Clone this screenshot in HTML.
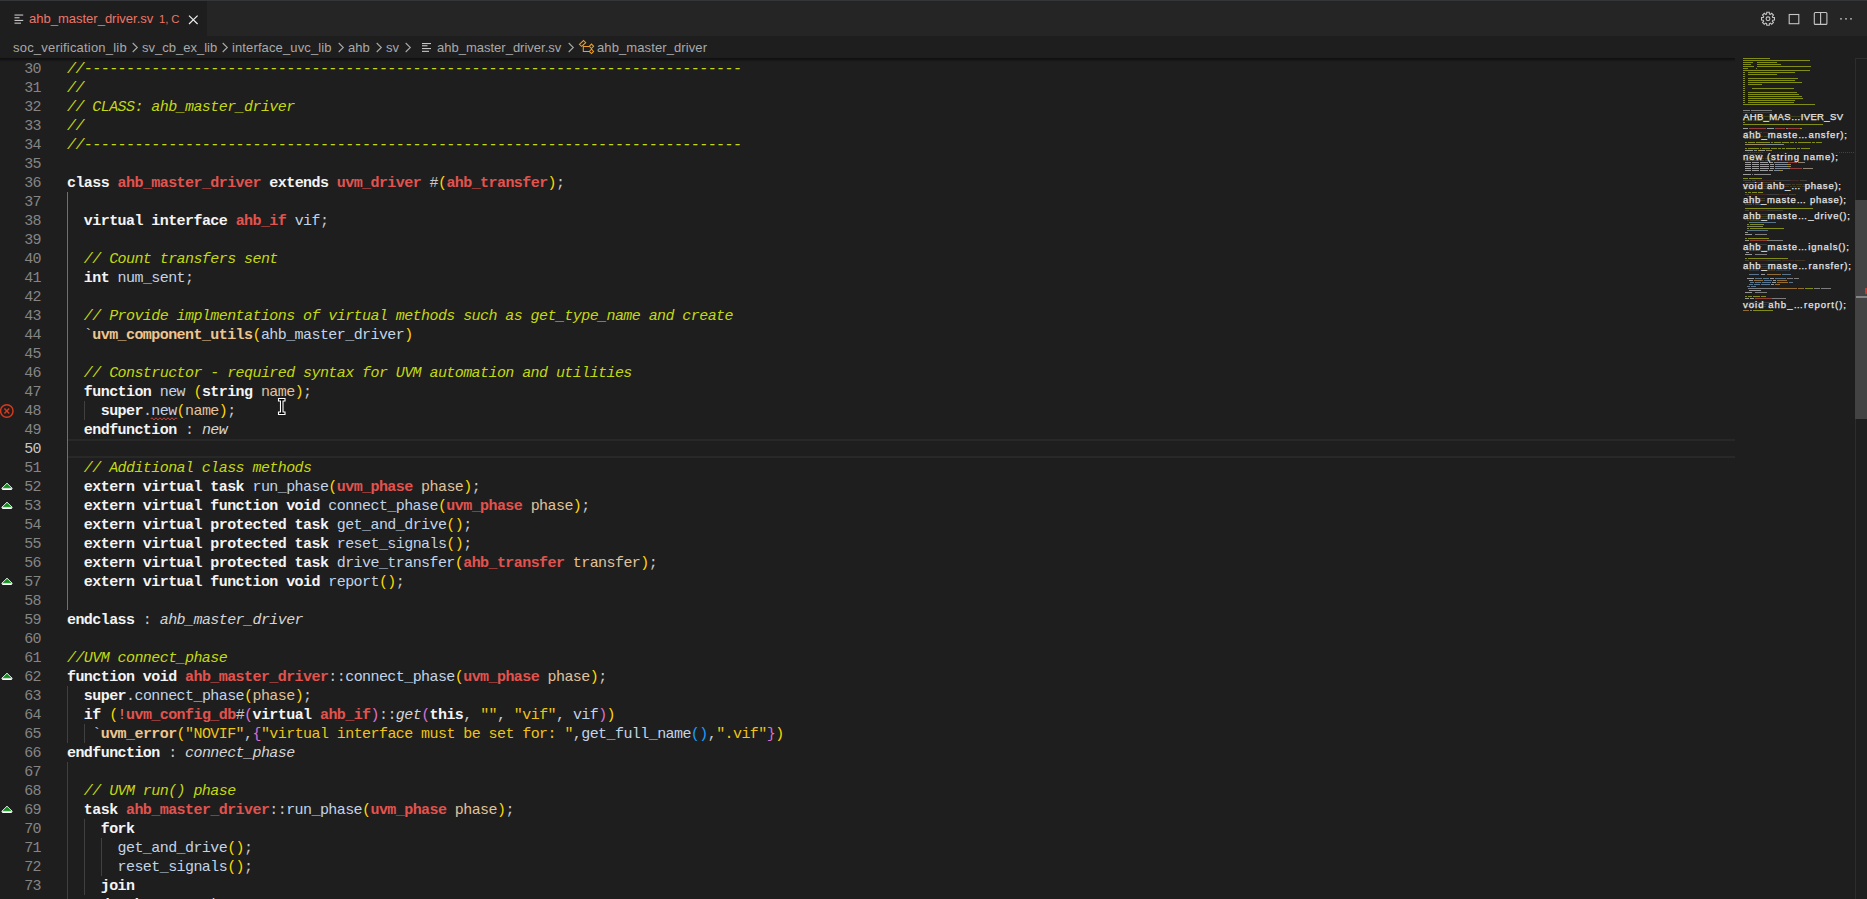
<!DOCTYPE html>
<html><head><meta charset="utf-8">
<style>
*{margin:0;padding:0;box-sizing:border-box}
html,body{width:1867px;height:899px;overflow:hidden;background:#1e1e1e}
body{position:relative;font-family:"Liberation Sans",sans-serif}
svg{position:absolute;overflow:visible}
#topb{position:absolute;left:0;top:0;width:1867px;height:1px;background:#35363a}
#tabs{position:absolute;left:0;top:1px;width:1867px;height:35px;background:#252526}
#tab{position:absolute;left:0;top:0;width:207px;height:35px;background:#1e1e1e}
#crumbs{position:absolute;left:0;top:36px;width:1867px;height:22px;background:#1e1e1e;color:#a9a9a9}
.ui{position:absolute;white-space:pre;font-size:13px;line-height:16px}
.ln{position:absolute;left:0;width:41px;text-align:right;font-family:"Liberation Mono",monospace;font-size:15px;letter-spacing:-0.572px;line-height:19px;height:19px;padding-top:2px;color:#858585}
.ln.act{color:#c6c6c6}
.cl{position:absolute;left:67px;font-family:"Liberation Mono",monospace;font-size:15px;letter-spacing:-0.572px;line-height:19px;height:19px;padding-top:2px;white-space:pre;color:#c8c8c8}
.c{color:#c4d814;font-style:italic}
.k{color:#f4f4f4;font-weight:bold}
.t{color:#e2534e;font-weight:bold}
.tr{color:#e2534e}
.i{color:#c2d4e8}
.p{color:#e0c29c}
.m{color:#eec58e;font-weight:bold}
.bt{color:#a8bcd0}
.ex{color:#e57a76}
.o{color:#c8c8c8}
.sq{color:#c2d4e8}
.b1{color:#ffd700}.b2{color:#da70d6}.b3{color:#179fff}
.s{color:#eec418}
.e{color:#d4d4d4;font-style:italic}
.g{position:absolute;width:1px;background:#404040}
.g.ga{background:#6d7073}
#curline{position:absolute;left:68px;top:439px;width:1667px;height:19px;border-top:2px solid #282828;border-bottom:2px solid #282828}
#shadow{position:absolute;left:0;top:58px;width:1735px;height:4px;background:linear-gradient(rgba(0,0,0,.55),rgba(0,0,0,0))}
#vsb{position:absolute;left:1855px;top:58px;width:12px;height:841px;border-left:1px solid #2d2d2d;border-top:1px solid #2d2d2d}
#slider{position:absolute;left:1855px;top:200px;width:12px;height:219px;background:#434343}
.mm{position:absolute;height:2px;background-clip:content-box!important;padding-bottom:1px}
.mh{position:absolute;left:1743px;font-size:9.5px;font-weight:normal;line-height:11px;color:#e6e6e6;white-space:pre;-webkit-text-stroke:0.25px #e6e6e6;background:rgba(30,30,30,.7)}
</style></head><body>
<div id="topb"></div>
<div id="tabs"><div id="tab">
  <svg style="left:0;top:0" width="30" height="35"><g fill="#c5c5c5"><rect x="14.5" y="13.5" width="8.7" height="1.1"/><rect x="14.5" y="16.2" width="5" height="1.1"/><rect x="14.5" y="18.9" width="8.7" height="1.1"/><rect x="14.5" y="21.6" width="6.5" height="1.1"/></g></svg>
  <div class="ui" style="left:29px;top:10px;color:#ef7566">ahb_master_driver.sv</div>
  <div class="ui" style="left:159px;top:10.2px;font-size:11.3px;color:#ef7566">1,</div><div class="ui" style="left:171.3px;top:10.2px;font-size:11.3px;color:#ef7566">C</div>
  <svg style="left:0;top:0" width="207" height="35"><path d="M189 14.6 L197.6 23 M197.6 14.6 L189 23" stroke="#ededed" stroke-width="1.2"/></svg>
</div>
  <svg style="left:1755px;top:-1px" width="112" height="35">
    <g fill="none" stroke="#c5c5c5" stroke-width="1.1">
      <path d="M17.53 16.92 L17.69 17.37 L19.48 17.54 L19.48 20.06 L17.69 20.23 L17.53 20.68 L17.33 21.10 L18.47 22.49 L16.69 24.27 L15.30 23.13 L14.88 23.33 L14.43 23.49 L14.26 25.28 L11.74 25.28 L11.57 23.49 L11.12 23.33 L10.70 23.13 L9.31 24.27 L7.53 22.49 L8.67 21.10 L8.47 20.68 L8.31 20.23 L6.52 20.06 L6.52 17.54 L8.31 17.37 L8.47 16.92 L8.67 16.50 L7.53 15.11 L9.31 13.33 L10.70 14.47 L11.12 14.27 L11.57 14.11 L11.74 12.32 L14.26 12.32 L14.43 14.11 L14.88 14.27 L15.30 14.47 L16.69 13.33 L18.47 15.11 L17.33 16.50 Z"/>
      <circle cx="13" cy="18.8" r="1.9"/>
      <rect x="34.2" y="14.5" width="9.6" height="9.2"/>
      <rect x="59.3" y="12.5" width="12.6" height="11.9" rx="1"/>
      <path d="M65.6 12.5 V24.4"/>
    </g>
    <g fill="#c5c5c5"><circle cx="86" cy="18.8" r="0.9"/><circle cx="91" cy="18.8" r="0.9"/><circle cx="96" cy="18.8" r="0.9"/></g>
  </svg>
</div>
<div id="crumbs">
  <div class="ui" style="left:13px;top:4px;letter-spacing:0.2px">soc_verification_lib</div>
  <div class="ui" style="left:142px;top:4px">sv_cb_ex_lib</div>
  <div class="ui" style="left:232px;top:4px;letter-spacing:0.12px">interface_uvc_lib</div>
  <div class="ui" style="left:348px;top:4px">ahb</div>
  <div class="ui" style="left:386px;top:4px">sv</div>
  <div class="ui" style="left:437px;top:4px">ahb_master_driver.sv</div>
  <div class="ui" style="left:597px;top:4px;letter-spacing:0.1px">ahb_master_driver</div>
  <svg style="left:0;top:0" width="800" height="22"><g fill="none" stroke="#a9a9a9" stroke-width="1.1">
    <path d="M132.7 7 L137.3 11.5 L132.7 16"/>
    <path d="M222.7 7 L227.3 11.5 L222.7 16"/>
    <path d="M338.7 7 L343.3 11.5 L338.7 16"/>
    <path d="M376.7 7 L381.3 11.5 L376.7 16"/>
    <path d="M405.7 7 L410.3 11.5 L405.7 16"/>
    <path d="M568.7 7 L573.3 11.5 L568.7 16"/>
  </g>
  <g fill="#c5c5c5"><rect x="422" y="7" width="9" height="1.1"/><rect x="422" y="9.2" width="5.5" height="1.1"/><rect x="422" y="12" width="9" height="1.1"/><rect x="422" y="14.8" width="7" height="1.1"/></g>
  <g fill="none" stroke="#ee9d28" stroke-width="1.05">
    <path d="M579.4 8.3 L583.5 4.5 L585.7 6.7 L581.6 10.4 Z"/>
    <path d="M583.3 9.6 V15.4 H589.2 M583.3 10.4 H589.2"/>
    <path d="M591.5 8.1 L593.6 10.3 L591.5 12.5 L589.3 10.3 Z"/>
    <path d="M591.5 13.2 L593.6 15.4 L591.5 17.6 L589.3 15.4 Z"/>
  </g></svg>
</div>
<div id="editor-layer">
<div id="curline"></div>
<div class="g ga" style="left:67px;top:192px;height:418px"></div>
<div class="g" style="left:84px;top:401px;height:19px"></div>
<div class="g" style="left:67px;top:686px;height:57px"></div>
<div class="g" style="left:84px;top:724px;height:19px"></div>
<div class="g" style="left:67px;top:762px;height:152px"></div>
<div class="g" style="left:84px;top:819px;height:76px"></div>
<div class="g" style="left:101px;top:838px;height:38px"></div>
<div class="ln" style="top:58px">30</div>
<div class="cl" style="top:58px"><span class="c">//------------------------------------------------------------------------------</span></div>
<div class="ln" style="top:77px">31</div>
<div class="cl" style="top:77px"><span class="c">//</span></div>
<div class="ln" style="top:96px">32</div>
<div class="cl" style="top:96px"><span class="c">// CLASS: ahb_master_driver</span></div>
<div class="ln" style="top:115px">33</div>
<div class="cl" style="top:115px"><span class="c">//</span></div>
<div class="ln" style="top:134px">34</div>
<div class="cl" style="top:134px"><span class="c">//------------------------------------------------------------------------------</span></div>
<div class="ln" style="top:153px">35</div>
<div class="ln" style="top:172px">36</div>
<div class="cl" style="top:172px"><span class="k">class</span> <span class="t">ahb_master_driver</span> <span class="k">extends</span> <span class="t">uvm_driver</span> <span class="o">#</span><span class="b1">(</span><span class="t">ahb_transfer</span><span class="b1">)</span><span class="o">;</span></div>
<div class="ln" style="top:191px">37</div>
<div class="ln" style="top:210px">38</div>
<div class="cl" style="top:210px">  <span class="k">virtual</span> <span class="k">interface</span> <span class="t">ahb_if</span> <span class="i">vif</span><span class="o">;</span></div>
<div class="ln" style="top:229px">39</div>
<div class="ln" style="top:248px">40</div>
<div class="cl" style="top:248px">  <span class="c">// Count transfers sent</span></div>
<div class="ln" style="top:267px">41</div>
<div class="cl" style="top:267px">  <span class="k">int</span> <span class="i">num_sent</span><span class="o">;</span></div>
<div class="ln" style="top:286px">42</div>
<div class="ln" style="top:305px">43</div>
<div class="cl" style="top:305px">  <span class="c">// Provide implmentations of virtual methods such as get_type_name and create</span></div>
<div class="ln" style="top:324px">44</div>
<div class="cl" style="top:324px">  <span class="bt">`</span><span class="m">uvm_component_utils</span><span class="b1">(</span><span class="i">ahb_master_driver</span><span class="b1">)</span></div>
<div class="ln" style="top:343px">45</div>
<div class="ln" style="top:362px">46</div>
<div class="cl" style="top:362px">  <span class="c">// Constructor - required syntax for UVM automation and utilities</span></div>
<div class="ln" style="top:381px">47</div>
<div class="cl" style="top:381px">  <span class="k">function</span> <span class="i">new</span> <span class="b1">(</span><span class="k">string</span> <span class="p">name</span><span class="b1">)</span><span class="o">;</span></div>
<div class="ln" style="top:400px">48</div>
<div class="cl" style="top:400px">    <span class="k">super</span><span class="o">.</span><span class="sq">new</span><span class="b1">(</span><span class="p">name</span><span class="b1">)</span><span class="o">;</span></div>
<div class="ln" style="top:419px">49</div>
<div class="cl" style="top:419px">  <span class="k">endfunction</span><span class="o"> : </span><span class="e">new</span></div>
<div class="ln act" style="top:438px">50</div>
<div class="ln" style="top:457px">51</div>
<div class="cl" style="top:457px">  <span class="c">// Additional class methods</span></div>
<div class="ln" style="top:476px">52</div>
<div class="cl" style="top:476px">  <span class="k">extern virtual task</span> <span class="i">run_phase</span><span class="b1">(</span><span class="t">uvm_phase</span> <span class="p">phase</span><span class="b1">)</span><span class="o">;</span></div>
<div class="ln" style="top:495px">53</div>
<div class="cl" style="top:495px">  <span class="k">extern virtual function void</span> <span class="i">connect_phase</span><span class="b1">(</span><span class="t">uvm_phase</span> <span class="p">phase</span><span class="b1">)</span><span class="o">;</span></div>
<div class="ln" style="top:514px">54</div>
<div class="cl" style="top:514px">  <span class="k">extern virtual protected task</span> <span class="i">get_and_drive</span><span class="b1">()</span><span class="o">;</span></div>
<div class="ln" style="top:533px">55</div>
<div class="cl" style="top:533px">  <span class="k">extern virtual protected task</span> <span class="i">reset_signals</span><span class="b1">()</span><span class="o">;</span></div>
<div class="ln" style="top:552px">56</div>
<div class="cl" style="top:552px">  <span class="k">extern virtual protected task</span> <span class="i">drive_transfer</span><span class="b1">(</span><span class="t">ahb_transfer</span> <span class="p">transfer</span><span class="b1">)</span><span class="o">;</span></div>
<div class="ln" style="top:571px">57</div>
<div class="cl" style="top:571px">  <span class="k">extern virtual function void</span> <span class="i">report</span><span class="b1">()</span><span class="o">;</span></div>
<div class="ln" style="top:590px">58</div>
<div class="ln" style="top:609px">59</div>
<div class="cl" style="top:609px"><span class="k">endclass</span><span class="o"> : </span><span class="e">ahb_master_driver</span></div>
<div class="ln" style="top:628px">60</div>
<div class="ln" style="top:647px">61</div>
<div class="cl" style="top:647px"><span class="c">//UVM connect_phase</span></div>
<div class="ln" style="top:666px">62</div>
<div class="cl" style="top:666px"><span class="k">function void</span> <span class="t">ahb_master_driver</span><span class="o">::</span><span class="i">connect_phase</span><span class="b1">(</span><span class="t">uvm_phase</span> <span class="p">phase</span><span class="b1">)</span><span class="o">;</span></div>
<div class="ln" style="top:685px">63</div>
<div class="cl" style="top:685px">  <span class="k">super</span><span class="o">.</span><span class="i">connect_phase</span><span class="b1">(</span><span class="p">phase</span><span class="b1">)</span><span class="o">;</span></div>
<div class="ln" style="top:704px">64</div>
<div class="cl" style="top:704px">  <span class="k">if</span> <span class="b1">(</span><span class="ex">!</span><span class="t">uvm_config_db</span><span class="o">#</span><span class="b2">(</span><span class="k">virtual</span> <span class="t">ahb_if</span><span class="b2">)</span><span class="o">::</span><span class="e">get</span><span class="b2">(</span><span class="k">this</span><span class="o">, </span><span class="s">&quot;&quot;</span><span class="o">, </span><span class="s">&quot;vif&quot;</span><span class="o">, </span><span class="i">vif</span><span class="b2">)</span><span class="b1">)</span></div>
<div class="ln" style="top:723px">65</div>
<div class="cl" style="top:723px">   <span class="bt">`</span><span class="m">uvm_error</span><span class="b1">(</span><span class="s">&quot;NOVIF&quot;</span><span class="o">,</span><span class="b2">{</span><span class="s">&quot;virtual interface must be set for: &quot;</span><span class="o">,</span><span class="i">get_full_name</span><span class="b3">()</span><span class="o">,</span><span class="s">&quot;.vif&quot;</span><span class="b2">}</span><span class="b1">)</span></div>
<div class="ln" style="top:742px">66</div>
<div class="cl" style="top:742px"><span class="k">endfunction</span><span class="o"> : </span><span class="e">connect_phase</span></div>
<div class="ln" style="top:761px">67</div>
<div class="ln" style="top:780px">68</div>
<div class="cl" style="top:780px">  <span class="c">// UVM run() phase</span></div>
<div class="ln" style="top:799px">69</div>
<div class="cl" style="top:799px">  <span class="k">task</span> <span class="t">ahb_master_driver</span><span class="o">::</span><span class="i">run_phase</span><span class="b1">(</span><span class="t">uvm_phase</span> <span class="p">phase</span><span class="b1">)</span><span class="o">;</span></div>
<div class="ln" style="top:818px">70</div>
<div class="cl" style="top:818px">    <span class="k">fork</span></div>
<div class="ln" style="top:837px">71</div>
<div class="cl" style="top:837px">      <span class="i">get_and_drive</span><span class="b1">()</span><span class="o">;</span></div>
<div class="ln" style="top:856px">72</div>
<div class="cl" style="top:856px">      <span class="i">reset_signals</span><span class="b1">()</span><span class="o">;</span></div>
<div class="ln" style="top:875px">73</div>
<div class="cl" style="top:875px">    <span class="k">join</span></div>
<div class="ln" style="top:894px">74</div>
<div class="cl" style="top:894px">  <span class="k">endtask</span><span class="o"> : </span><span class="e">run_phase</span></div>
<svg style="left:0;top:0" width="300" height="899">
  <g fill="none" stroke="#d63a1e" stroke-width="1.45"><circle cx="6.8" cy="411" r="6.25"/><path d="M4.4 408.6 L9.2 413.4 M9.2 408.6 L4.4 413.4"/></g>
  <path d="M151 418.8 q1 -2 2 0 t2 0 t2 0 t2 0 t2 0 t2 0 t2 0 t2 0 t2 0 t2 0 t2 0 t2 0 t2 0" fill="none" stroke="#e54d4a" stroke-width="1"/>
  <path d="M7 483.2 L12.3 488.4 L1.7 488.4 Z" fill="#10901e" stroke="#fff" stroke-width="0.9"/><rect x="2.2" y="489" width="9.6" height="1" fill="#fff"/>
<path d="M7 502.2 L12.3 507.4 L1.7 507.4 Z" fill="#10901e" stroke="#fff" stroke-width="0.9"/><rect x="2.2" y="508" width="9.6" height="1" fill="#fff"/>
<path d="M7 578.2 L12.3 583.4 L1.7 583.4 Z" fill="#10901e" stroke="#fff" stroke-width="0.9"/><rect x="2.2" y="584" width="9.6" height="1" fill="#fff"/>
<path d="M7 673.2 L12.3 678.4 L1.7 678.4 Z" fill="#10901e" stroke="#fff" stroke-width="0.9"/><rect x="2.2" y="679" width="9.6" height="1" fill="#fff"/>
<path d="M7 806.2 L12.3 811.4 L1.7 811.4 Z" fill="#10901e" stroke="#fff" stroke-width="0.9"/><rect x="2.2" y="812" width="9.6" height="1" fill="#fff"/>
  <g><path d="M278.5 398.5 H285 V401 H283 V412 H285 V414.5 H278.5 V412 H280.5 V401 H278.5 Z" fill="#000" stroke="#fff" stroke-width="1.1"/></g>
</svg>
</div>
<div id="shadow"></div>
<div id="minimap" style="position:absolute;left:0;top:0;width:1867px;height:899px;pointer-events:none"><div style="opacity:.6"><div class="mm" style="left:1743px;top:58px;width:27px;background:#c4d814"></div>
<div class="mm" style="left:1743px;top:60px;width:67px;background:#c4d814"></div>
<div class="mm" style="left:1743px;top:62px;width:10px;background:#c4d814"></div>
<div class="mm" style="left:1757px;top:62px;width:20px;background:#c4d814"></div>
<div class="mm" style="left:1743px;top:64px;width:8px;background:#c4d814"></div>
<div class="mm" style="left:1757px;top:64px;width:24px;background:#c4d814"></div>
<div class="mm" style="left:1743px;top:66px;width:11px;background:#c4d814"></div>
<div class="mm" style="left:1757px;top:66px;width:54px;background:#c4d814"></div>
<div class="mm" style="left:1743px;top:68px;width:5px;background:#c4d814"></div>
<div class="mm" style="left:1756px;top:68px;width:1px;background:#c4d814"></div>
<div class="mm" style="left:1743px;top:70px;width:67px;background:#c4d814"></div>
<div class="mm" style="left:1743px;top:72px;width:2px;background:#c4d814"></div>
<div class="mm" style="left:1748px;top:72px;width:47px;background:#c4d814"></div>
<div class="mm" style="left:1743px;top:74px;width:2px;background:#c4d814"></div>
<div class="mm" style="left:1748px;top:74px;width:29px;background:#c4d814"></div>
<div class="mm" style="left:1743px;top:76px;width:2px;background:#c4d814"></div>
<div class="mm" style="left:1743px;top:78px;width:2px;background:#c4d814"></div>
<div class="mm" style="left:1748px;top:78px;width:50px;background:#c4d814"></div>
<div class="mm" style="left:1743px;top:80px;width:2px;background:#c4d814"></div>
<div class="mm" style="left:1748px;top:80px;width:47px;background:#c4d814"></div>
<div class="mm" style="left:1743px;top:82px;width:2px;background:#c4d814"></div>
<div class="mm" style="left:1748px;top:82px;width:54px;background:#c4d814"></div>
<div class="mm" style="left:1743px;top:84px;width:2px;background:#c4d814"></div>
<div class="mm" style="left:1748px;top:84px;width:14px;background:#c4d814"></div>
<div class="mm" style="left:1743px;top:86px;width:2px;background:#c4d814"></div>
<div class="mm" style="left:1743px;top:88px;width:2px;background:#c4d814"></div>
<div class="mm" style="left:1752px;top:88px;width:42px;background:#c4d814"></div>
<div class="mm" style="left:1743px;top:90px;width:2px;background:#c4d814"></div>
<div class="mm" style="left:1743px;top:92px;width:2px;background:#c4d814"></div>
<div class="mm" style="left:1748px;top:92px;width:49px;background:#c4d814"></div>
<div class="mm" style="left:1743px;top:94px;width:2px;background:#c4d814"></div>
<div class="mm" style="left:1748px;top:94px;width:51px;background:#c4d814"></div>
<div class="mm" style="left:1743px;top:96px;width:2px;background:#c4d814"></div>
<div class="mm" style="left:1748px;top:96px;width:54px;background:#c4d814"></div>
<div class="mm" style="left:1743px;top:98px;width:2px;background:#c4d814"></div>
<div class="mm" style="left:1748px;top:98px;width:55px;background:#c4d814"></div>
<div class="mm" style="left:1743px;top:100px;width:2px;background:#c4d814"></div>
<div class="mm" style="left:1748px;top:100px;width:47px;background:#c4d814"></div>
<div class="mm" style="left:1743px;top:102px;width:2px;background:#c4d814"></div>
<div class="mm" style="left:1748px;top:102px;width:46px;background:#c4d814"></div>
<div class="mm" style="left:1743px;top:104px;width:72px;background:#c4d814"></div>
<div class="mm" style="left:1743px;top:110px;width:7px;background:#bcbcbc"></div>
<div class="mm" style="left:1751px;top:110px;width:21px;background:#bcbcbc"></div>
<div class="mm" style="left:1743px;top:112px;width:7px;background:#bcbcbc"></div>
<div class="mm" style="left:1751px;top:112px;width:21px;background:#bcbcbc"></div>
<div class="mm" style="left:1743px;top:116px;width:80px;background:#c4d814"></div>
<div class="mm" style="left:1743px;top:118px;width:2px;background:#c4d814"></div>
<div class="mm" style="left:1743px;top:120px;width:2px;background:#c4d814"></div>
<div class="mm" style="left:1746px;top:120px;width:6px;background:#c4d814"></div>
<div class="mm" style="left:1753px;top:120px;width:17px;background:#c4d814"></div>
<div class="mm" style="left:1743px;top:122px;width:2px;background:#c4d814"></div>
<div class="mm" style="left:1743px;top:124px;width:80px;background:#c4d814"></div>
<div class="mm" style="left:1743px;top:128px;width:5px;background:#f0f0f0"></div>
<div class="mm" style="left:1749px;top:128px;width:17px;background:#e2534e"></div>
<div class="mm" style="left:1767px;top:128px;width:7px;background:#f0f0f0"></div>
<div class="mm" style="left:1775px;top:128px;width:10px;background:#e2534e"></div>
<div class="mm" style="left:1786px;top:128px;width:1px;background:#c8c8c8"></div>
<div class="mm" style="left:1787px;top:128px;width:1px;background:#ffd700"></div>
<div class="mm" style="left:1788px;top:128px;width:12px;background:#e2534e"></div>
<div class="mm" style="left:1800px;top:128px;width:1px;background:#ffd700"></div>
<div class="mm" style="left:1801px;top:128px;width:1px;background:#c8c8c8"></div>
<div class="mm" style="left:1745px;top:132px;width:7px;background:#f0f0f0"></div>
<div class="mm" style="left:1753px;top:132px;width:9px;background:#f0f0f0"></div>
<div class="mm" style="left:1763px;top:132px;width:6px;background:#e2534e"></div>
<div class="mm" style="left:1770px;top:132px;width:3px;background:#c2d4e8"></div>
<div class="mm" style="left:1773px;top:132px;width:1px;background:#c8c8c8"></div>
<div class="mm" style="left:1745px;top:136px;width:2px;background:#c4d814"></div>
<div class="mm" style="left:1748px;top:136px;width:5px;background:#c4d814"></div>
<div class="mm" style="left:1754px;top:136px;width:9px;background:#c4d814"></div>
<div class="mm" style="left:1764px;top:136px;width:4px;background:#c4d814"></div>
<div class="mm" style="left:1745px;top:138px;width:3px;background:#f0f0f0"></div>
<div class="mm" style="left:1749px;top:138px;width:8px;background:#c2d4e8"></div>
<div class="mm" style="left:1757px;top:138px;width:1px;background:#c8c8c8"></div>
<div class="mm" style="left:1745px;top:142px;width:2px;background:#c4d814"></div>
<div class="mm" style="left:1748px;top:142px;width:7px;background:#c4d814"></div>
<div class="mm" style="left:1756px;top:142px;width:14px;background:#c4d814"></div>
<div class="mm" style="left:1771px;top:142px;width:2px;background:#c4d814"></div>
<div class="mm" style="left:1774px;top:142px;width:7px;background:#c4d814"></div>
<div class="mm" style="left:1782px;top:142px;width:7px;background:#c4d814"></div>
<div class="mm" style="left:1790px;top:142px;width:4px;background:#c4d814"></div>
<div class="mm" style="left:1795px;top:142px;width:2px;background:#c4d814"></div>
<div class="mm" style="left:1798px;top:142px;width:13px;background:#c4d814"></div>
<div class="mm" style="left:1812px;top:142px;width:3px;background:#c4d814"></div>
<div class="mm" style="left:1816px;top:142px;width:6px;background:#c4d814"></div>
<div class="mm" style="left:1745px;top:144px;width:1px;background:#ebcfa6"></div>
<div class="mm" style="left:1746px;top:144px;width:19px;background:#ebcfa6"></div>
<div class="mm" style="left:1765px;top:144px;width:1px;background:#ffd700"></div>
<div class="mm" style="left:1766px;top:144px;width:17px;background:#c2d4e8"></div>
<div class="mm" style="left:1783px;top:144px;width:1px;background:#ffd700"></div>
<div class="mm" style="left:1745px;top:148px;width:2px;background:#c4d814"></div>
<div class="mm" style="left:1748px;top:148px;width:11px;background:#c4d814"></div>
<div class="mm" style="left:1760px;top:148px;width:1px;background:#c4d814"></div>
<div class="mm" style="left:1762px;top:148px;width:8px;background:#c4d814"></div>
<div class="mm" style="left:1771px;top:148px;width:6px;background:#c4d814"></div>
<div class="mm" style="left:1778px;top:148px;width:3px;background:#c4d814"></div>
<div class="mm" style="left:1782px;top:148px;width:3px;background:#c4d814"></div>
<div class="mm" style="left:1786px;top:148px;width:10px;background:#c4d814"></div>
<div class="mm" style="left:1797px;top:148px;width:3px;background:#c4d814"></div>
<div class="mm" style="left:1801px;top:148px;width:9px;background:#c4d814"></div>
<div class="mm" style="left:1745px;top:150px;width:8px;background:#f0f0f0"></div>
<div class="mm" style="left:1754px;top:150px;width:3px;background:#c2d4e8"></div>
<div class="mm" style="left:1758px;top:150px;width:1px;background:#ffd700"></div>
<div class="mm" style="left:1759px;top:150px;width:6px;background:#f0f0f0"></div>
<div class="mm" style="left:1766px;top:150px;width:4px;background:#dcc6a6"></div>
<div class="mm" style="left:1770px;top:150px;width:1px;background:#ffd700"></div>
<div class="mm" style="left:1771px;top:150px;width:1px;background:#c8c8c8"></div>
<div class="mm" style="left:1747px;top:152px;width:5px;background:#f0f0f0"></div>
<div class="mm" style="left:1752px;top:152px;width:1px;background:#c8c8c8"></div>
<div class="mm" style="left:1753px;top:152px;width:3px;background:#c2d4e8"></div>
<div class="mm" style="left:1756px;top:152px;width:1px;background:#ffd700"></div>
<div class="mm" style="left:1757px;top:152px;width:4px;background:#dcc6a6"></div>
<div class="mm" style="left:1761px;top:152px;width:1px;background:#ffd700"></div>
<div class="mm" style="left:1762px;top:152px;width:1px;background:#c8c8c8"></div>
<div class="mm" style="left:1745px;top:154px;width:11px;background:#f0f0f0"></div>
<div class="mm" style="left:1757px;top:154px;width:1px;background:#c8c8c8"></div>
<div class="mm" style="left:1759px;top:154px;width:3px;background:#d4d4d4"></div>
<div class="mm" style="left:1745px;top:158px;width:2px;background:#c4d814"></div>
<div class="mm" style="left:1748px;top:158px;width:10px;background:#c4d814"></div>
<div class="mm" style="left:1759px;top:158px;width:5px;background:#c4d814"></div>
<div class="mm" style="left:1765px;top:158px;width:7px;background:#c4d814"></div>
<div class="mm" style="left:1745px;top:160px;width:6px;background:#f0f0f0"></div>
<div class="mm" style="left:1752px;top:160px;width:7px;background:#f0f0f0"></div>
<div class="mm" style="left:1760px;top:160px;width:4px;background:#f0f0f0"></div>
<div class="mm" style="left:1765px;top:160px;width:9px;background:#c2d4e8"></div>
<div class="mm" style="left:1774px;top:160px;width:1px;background:#ffd700"></div>
<div class="mm" style="left:1775px;top:160px;width:9px;background:#e2534e"></div>
<div class="mm" style="left:1785px;top:160px;width:5px;background:#dcc6a6"></div>
<div class="mm" style="left:1790px;top:160px;width:1px;background:#ffd700"></div>
<div class="mm" style="left:1791px;top:160px;width:1px;background:#c8c8c8"></div>
<div class="mm" style="left:1745px;top:162px;width:6px;background:#f0f0f0"></div>
<div class="mm" style="left:1752px;top:162px;width:7px;background:#f0f0f0"></div>
<div class="mm" style="left:1760px;top:162px;width:8px;background:#f0f0f0"></div>
<div class="mm" style="left:1769px;top:162px;width:4px;background:#f0f0f0"></div>
<div class="mm" style="left:1774px;top:162px;width:13px;background:#c2d4e8"></div>
<div class="mm" style="left:1787px;top:162px;width:1px;background:#ffd700"></div>
<div class="mm" style="left:1788px;top:162px;width:9px;background:#e2534e"></div>
<div class="mm" style="left:1798px;top:162px;width:5px;background:#dcc6a6"></div>
<div class="mm" style="left:1803px;top:162px;width:1px;background:#ffd700"></div>
<div class="mm" style="left:1804px;top:162px;width:1px;background:#c8c8c8"></div>
<div class="mm" style="left:1745px;top:164px;width:6px;background:#f0f0f0"></div>
<div class="mm" style="left:1752px;top:164px;width:7px;background:#f0f0f0"></div>
<div class="mm" style="left:1760px;top:164px;width:9px;background:#f0f0f0"></div>
<div class="mm" style="left:1770px;top:164px;width:4px;background:#f0f0f0"></div>
<div class="mm" style="left:1775px;top:164px;width:13px;background:#c2d4e8"></div>
<div class="mm" style="left:1788px;top:164px;width:2px;background:#ffd700"></div>
<div class="mm" style="left:1790px;top:164px;width:1px;background:#c8c8c8"></div>
<div class="mm" style="left:1745px;top:166px;width:6px;background:#f0f0f0"></div>
<div class="mm" style="left:1752px;top:166px;width:7px;background:#f0f0f0"></div>
<div class="mm" style="left:1760px;top:166px;width:9px;background:#f0f0f0"></div>
<div class="mm" style="left:1770px;top:166px;width:4px;background:#f0f0f0"></div>
<div class="mm" style="left:1775px;top:166px;width:13px;background:#c2d4e8"></div>
<div class="mm" style="left:1788px;top:166px;width:2px;background:#ffd700"></div>
<div class="mm" style="left:1790px;top:166px;width:1px;background:#c8c8c8"></div>
<div class="mm" style="left:1745px;top:168px;width:6px;background:#f0f0f0"></div>
<div class="mm" style="left:1752px;top:168px;width:7px;background:#f0f0f0"></div>
<div class="mm" style="left:1760px;top:168px;width:9px;background:#f0f0f0"></div>
<div class="mm" style="left:1770px;top:168px;width:4px;background:#f0f0f0"></div>
<div class="mm" style="left:1775px;top:168px;width:14px;background:#c2d4e8"></div>
<div class="mm" style="left:1789px;top:168px;width:1px;background:#ffd700"></div>
<div class="mm" style="left:1790px;top:168px;width:12px;background:#e2534e"></div>
<div class="mm" style="left:1803px;top:168px;width:8px;background:#dcc6a6"></div>
<div class="mm" style="left:1811px;top:168px;width:1px;background:#ffd700"></div>
<div class="mm" style="left:1812px;top:168px;width:1px;background:#c8c8c8"></div>
<div class="mm" style="left:1745px;top:170px;width:6px;background:#f0f0f0"></div>
<div class="mm" style="left:1752px;top:170px;width:7px;background:#f0f0f0"></div>
<div class="mm" style="left:1760px;top:170px;width:8px;background:#f0f0f0"></div>
<div class="mm" style="left:1769px;top:170px;width:4px;background:#f0f0f0"></div>
<div class="mm" style="left:1774px;top:170px;width:6px;background:#c2d4e8"></div>
<div class="mm" style="left:1780px;top:170px;width:2px;background:#ffd700"></div>
<div class="mm" style="left:1782px;top:170px;width:1px;background:#c8c8c8"></div>
<div class="mm" style="left:1743px;top:174px;width:8px;background:#f0f0f0"></div>
<div class="mm" style="left:1752px;top:174px;width:1px;background:#c8c8c8"></div>
<div class="mm" style="left:1754px;top:174px;width:17px;background:#d4d4d4"></div>
<div class="mm" style="left:1743px;top:178px;width:5px;background:#c4d814"></div>
<div class="mm" style="left:1749px;top:178px;width:13px;background:#c4d814"></div>
<div class="mm" style="left:1743px;top:180px;width:8px;background:#f0f0f0"></div>
<div class="mm" style="left:1752px;top:180px;width:4px;background:#f0f0f0"></div>
<div class="mm" style="left:1757px;top:180px;width:17px;background:#e2534e"></div>
<div class="mm" style="left:1774px;top:180px;width:2px;background:#c8c8c8"></div>
<div class="mm" style="left:1776px;top:180px;width:13px;background:#c2d4e8"></div>
<div class="mm" style="left:1789px;top:180px;width:1px;background:#ffd700"></div>
<div class="mm" style="left:1790px;top:180px;width:9px;background:#e2534e"></div>
<div class="mm" style="left:1800px;top:180px;width:5px;background:#dcc6a6"></div>
<div class="mm" style="left:1805px;top:180px;width:1px;background:#ffd700"></div>
<div class="mm" style="left:1806px;top:180px;width:1px;background:#c8c8c8"></div>
<div class="mm" style="left:1745px;top:182px;width:5px;background:#f0f0f0"></div>
<div class="mm" style="left:1750px;top:182px;width:1px;background:#c8c8c8"></div>
<div class="mm" style="left:1751px;top:182px;width:13px;background:#c2d4e8"></div>
<div class="mm" style="left:1764px;top:182px;width:1px;background:#ffd700"></div>
<div class="mm" style="left:1765px;top:182px;width:5px;background:#dcc6a6"></div>
<div class="mm" style="left:1770px;top:182px;width:1px;background:#ffd700"></div>
<div class="mm" style="left:1771px;top:182px;width:1px;background:#c8c8c8"></div>
<div class="mm" style="left:1745px;top:184px;width:2px;background:#f0f0f0"></div>
<div class="mm" style="left:1748px;top:184px;width:1px;background:#ffd700"></div>
<div class="mm" style="left:1749px;top:184px;width:1px;background:#e57a76"></div>
<div class="mm" style="left:1750px;top:184px;width:13px;background:#e2534e"></div>
<div class="mm" style="left:1763px;top:184px;width:1px;background:#c8c8c8"></div>
<div class="mm" style="left:1764px;top:184px;width:1px;background:#da70d6"></div>
<div class="mm" style="left:1765px;top:184px;width:7px;background:#f0f0f0"></div>
<div class="mm" style="left:1773px;top:184px;width:6px;background:#e2534e"></div>
<div class="mm" style="left:1779px;top:184px;width:1px;background:#da70d6"></div>
<div class="mm" style="left:1780px;top:184px;width:2px;background:#c8c8c8"></div>
<div class="mm" style="left:1782px;top:184px;width:3px;background:#d4d4d4"></div>
<div class="mm" style="left:1785px;top:184px;width:1px;background:#da70d6"></div>
<div class="mm" style="left:1786px;top:184px;width:4px;background:#f0f0f0"></div>
<div class="mm" style="left:1790px;top:184px;width:1px;background:#c8c8c8"></div>
<div class="mm" style="left:1792px;top:184px;width:2px;background:#eec418"></div>
<div class="mm" style="left:1794px;top:184px;width:1px;background:#c8c8c8"></div>
<div class="mm" style="left:1796px;top:184px;width:5px;background:#eec418"></div>
<div class="mm" style="left:1801px;top:184px;width:1px;background:#c8c8c8"></div>
<div class="mm" style="left:1803px;top:184px;width:3px;background:#c2d4e8"></div>
<div class="mm" style="left:1806px;top:184px;width:1px;background:#da70d6"></div>
<div class="mm" style="left:1807px;top:184px;width:1px;background:#ffd700"></div>
<div class="mm" style="left:1746px;top:186px;width:1px;background:#ebcfa6"></div>
<div class="mm" style="left:1747px;top:186px;width:9px;background:#ebcfa6"></div>
<div class="mm" style="left:1756px;top:186px;width:1px;background:#ffd700"></div>
<div class="mm" style="left:1757px;top:186px;width:7px;background:#eec418"></div>
<div class="mm" style="left:1764px;top:186px;width:1px;background:#c8c8c8"></div>
<div class="mm" style="left:1765px;top:186px;width:1px;background:#da70d6"></div>
<div class="mm" style="left:1766px;top:186px;width:8px;background:#eec418"></div>
<div class="mm" style="left:1775px;top:186px;width:9px;background:#eec418"></div>
<div class="mm" style="left:1785px;top:186px;width:4px;background:#eec418"></div>
<div class="mm" style="left:1790px;top:186px;width:2px;background:#eec418"></div>
<div class="mm" style="left:1793px;top:186px;width:3px;background:#eec418"></div>
<div class="mm" style="left:1797px;top:186px;width:4px;background:#eec418"></div>
<div class="mm" style="left:1802px;top:186px;width:1px;background:#eec418"></div>
<div class="mm" style="left:1803px;top:186px;width:1px;background:#c8c8c8"></div>
<div class="mm" style="left:1804px;top:186px;width:13px;background:#c2d4e8"></div>
<div class="mm" style="left:1817px;top:186px;width:2px;background:#179fff"></div>
<div class="mm" style="left:1819px;top:186px;width:1px;background:#c8c8c8"></div>
<div class="mm" style="left:1820px;top:186px;width:6px;background:#eec418"></div>
<div class="mm" style="left:1826px;top:186px;width:1px;background:#da70d6"></div>
<div class="mm" style="left:1827px;top:186px;width:1px;background:#ffd700"></div>
<div class="mm" style="left:1743px;top:188px;width:11px;background:#f0f0f0"></div>
<div class="mm" style="left:1755px;top:188px;width:1px;background:#c8c8c8"></div>
<div class="mm" style="left:1757px;top:188px;width:13px;background:#d4d4d4"></div>
<div class="mm" style="left:1745px;top:192px;width:2px;background:#c4d814"></div>
<div class="mm" style="left:1748px;top:192px;width:3px;background:#c4d814"></div>
<div class="mm" style="left:1752px;top:192px;width:5px;background:#c4d814"></div>
<div class="mm" style="left:1758px;top:192px;width:5px;background:#c4d814"></div>
<div class="mm" style="left:1745px;top:194px;width:4px;background:#f0f0f0"></div>
<div class="mm" style="left:1750px;top:194px;width:17px;background:#e2534e"></div>
<div class="mm" style="left:1767px;top:194px;width:2px;background:#c8c8c8"></div>
<div class="mm" style="left:1769px;top:194px;width:9px;background:#c2d4e8"></div>
<div class="mm" style="left:1778px;top:194px;width:1px;background:#ffd700"></div>
<div class="mm" style="left:1779px;top:194px;width:9px;background:#e2534e"></div>
<div class="mm" style="left:1789px;top:194px;width:5px;background:#dcc6a6"></div>
<div class="mm" style="left:1794px;top:194px;width:1px;background:#ffd700"></div>
<div class="mm" style="left:1795px;top:194px;width:1px;background:#c8c8c8"></div>
<div class="mm" style="left:1747px;top:196px;width:4px;background:#f0f0f0"></div>
<div class="mm" style="left:1749px;top:198px;width:13px;background:#c2d4e8"></div>
<div class="mm" style="left:1762px;top:198px;width:2px;background:#ffd700"></div>
<div class="mm" style="left:1764px;top:198px;width:1px;background:#c8c8c8"></div>
<div class="mm" style="left:1749px;top:200px;width:13px;background:#c2d4e8"></div>
<div class="mm" style="left:1762px;top:200px;width:2px;background:#ffd700"></div>
<div class="mm" style="left:1764px;top:200px;width:1px;background:#c8c8c8"></div>
<div class="mm" style="left:1747px;top:202px;width:4px;background:#f0f0f0"></div>
<div class="mm" style="left:1745px;top:204px;width:7px;background:#f0f0f0"></div>
<div class="mm" style="left:1753px;top:204px;width:1px;background:#c8c8c8"></div>
<div class="mm" style="left:1755px;top:204px;width:9px;background:#d4d4d4"></div>
<div class="mm" style="left:1745px;top:208px;width:68px;background:#c4d814"></div>
<div class="mm" style="left:1745px;top:210px;width:4px;background:#e8e8e8"></div>
<div class="mm" style="left:1750px;top:210px;width:17px;background:#e2534e"></div>
<div class="mm" style="left:1767px;top:210px;width:16px;background:#bcbcbc"></div>
<div class="mm" style="left:1747px;top:214px;width:20px;background:#bcbcbc"></div>
<div class="mm" style="left:1747px;top:216px;width:2px;background:#c4d814"></div>
<div class="mm" style="left:1750px;top:216px;width:30px;background:#c4d814"></div>
<div class="mm" style="left:1747px;top:218px;width:28px;background:#bcbcbc"></div>
<div class="mm" style="left:1747px;top:220px;width:2px;background:#c4d814"></div>
<div class="mm" style="left:1750px;top:220px;width:14px;background:#c4d814"></div>
<div class="mm" style="left:1749px;top:222px;width:27px;background:#7fb0d8"></div>
<div class="mm" style="left:1747px;top:224px;width:2px;background:#c4d814"></div>
<div class="mm" style="left:1750px;top:224px;width:14px;background:#c4d814"></div>
<div class="mm" style="left:1747px;top:226px;width:16px;background:#bcbcbc"></div>
<div class="mm" style="left:1747px;top:228px;width:2px;background:#c4d814"></div>
<div class="mm" style="left:1750px;top:228px;width:34px;background:#c4d814"></div>
<div class="mm" style="left:1747px;top:230px;width:21px;background:#7fb0d8"></div>
<div class="mm" style="left:1745px;top:232px;width:3px;background:#e8e8e8"></div>
<div class="mm" style="left:1745px;top:234px;width:7px;background:#e8e8e8"></div>
<div class="mm" style="left:1755px;top:234px;width:12px;background:#bcbcbc"></div>
<div class="mm" style="left:1745px;top:238px;width:2px;background:#c4d814"></div>
<div class="mm" style="left:1748px;top:238px;width:21px;background:#c4d814"></div>
<div class="mm" style="left:1745px;top:240px;width:4px;background:#e8e8e8"></div>
<div class="mm" style="left:1750px;top:240px;width:17px;background:#e2534e"></div>
<div class="mm" style="left:1767px;top:240px;width:16px;background:#bcbcbc"></div>
<div class="mm" style="left:1747px;top:244px;width:20px;background:#bcbcbc"></div>
<div class="mm" style="left:1747px;top:246px;width:15px;background:#7fb0d8"></div>
<div class="mm" style="left:1747px;top:248px;width:6px;background:#e8e8e8"></div>
<div class="mm" style="left:1749px;top:250px;width:22px;background:#7fb0d8"></div>
<div class="mm" style="left:1746px;top:252px;width:3px;background:#e8e8e8"></div>
<div class="mm" style="left:1745px;top:254px;width:7px;background:#e8e8e8"></div>
<div class="mm" style="left:1755px;top:254px;width:12px;background:#bcbcbc"></div>
<div class="mm" style="left:1745px;top:258px;width:2px;background:#c4d814"></div>
<div class="mm" style="left:1748px;top:258px;width:40px;background:#c4d814"></div>
<div class="mm" style="left:1745px;top:260px;width:4px;background:#e8e8e8"></div>
<div class="mm" style="left:1750px;top:260px;width:17px;background:#e2534e"></div>
<div class="mm" style="left:1767px;top:260px;width:14px;background:#bcbcbc"></div>
<div class="mm" style="left:1782px;top:260px;width:12px;background:#e2534e"></div>
<div class="mm" style="left:1795px;top:260px;width:10px;background:#e0a040"></div>
<div class="mm" style="left:1747px;top:264px;width:30px;background:#bcbcbc"></div>
<div class="mm" style="left:1749px;top:266px;width:20px;background:#7fb0d8"></div>
<div class="mm" style="left:1771px;top:266px;width:12px;background:#e0a040"></div>
<div class="mm" style="left:1749px;top:268px;width:10px;background:#7fb0d8"></div>
<div class="mm" style="left:1761px;top:268px;width:14px;background:#e0a040"></div>
<div class="mm" style="left:1776px;top:268px;width:9px;background:#7fb0d8"></div>
<div class="mm" style="left:1749px;top:270px;width:10px;background:#7fb0d8"></div>
<div class="mm" style="left:1761px;top:270px;width:14px;background:#e0a040"></div>
<div class="mm" style="left:1776px;top:270px;width:14px;background:#7fb0d8"></div>
<div class="mm" style="left:1749px;top:274px;width:10px;background:#7fb0d8"></div>
<div class="mm" style="left:1761px;top:274px;width:4px;background:#e8e8e8"></div>
<div class="mm" style="left:1767px;top:274px;width:14px;background:#e0a040"></div>
<div class="mm" style="left:1782px;top:274px;width:9px;background:#7fb0d8"></div>
<div class="mm" style="left:1747px;top:278px;width:7px;background:#e8e8e8"></div>
<div class="mm" style="left:1755px;top:278px;width:7px;background:#7fb0d8"></div>
<div class="mm" style="left:1763px;top:278px;width:6px;background:#7fb0d8"></div>
<div class="mm" style="left:1770px;top:278px;width:4px;background:#e8e8e8"></div>
<div class="mm" style="left:1775px;top:278px;width:11px;background:#7fb0d8"></div>
<div class="mm" style="left:1787px;top:278px;width:6px;background:#bcbcbc"></div>
<div class="mm" style="left:1794px;top:278px;width:5px;background:#bcbcbc"></div>
<div class="mm" style="left:1749px;top:280px;width:4px;background:#e8e8e8"></div>
<div class="mm" style="left:1754px;top:280px;width:9px;background:#e0a040"></div>
<div class="mm" style="left:1764px;top:280px;width:8px;background:#7fb0d8"></div>
<div class="mm" style="left:1773px;top:280px;width:3px;background:#e8e8e8"></div>
<div class="mm" style="left:1777px;top:280px;width:10px;background:#e0a040"></div>
<div class="mm" style="left:1750px;top:282px;width:4px;background:#7fb0d8"></div>
<div class="mm" style="left:1755px;top:282px;width:6px;background:#7fb0d8"></div>
<div class="mm" style="left:1762px;top:282px;width:9px;background:#7fb0d8"></div>
<div class="mm" style="left:1772px;top:282px;width:4px;background:#e8e8e8"></div>
<div class="mm" style="left:1777px;top:282px;width:11px;background:#e0a040"></div>
<div class="mm" style="left:1789px;top:282px;width:4px;background:#7fb0d8"></div>
<div class="mm" style="left:1749px;top:284px;width:4px;background:#7fb0d8"></div>
<div class="mm" style="left:1754px;top:284px;width:6px;background:#7fb0d8"></div>
<div class="mm" style="left:1761px;top:284px;width:9px;background:#7fb0d8"></div>
<div class="mm" style="left:1771px;top:284px;width:3px;background:#e8e8e8"></div>
<div class="mm" style="left:1775px;top:284px;width:5px;background:#e0a040"></div>
<div class="mm" style="left:1747px;top:286px;width:3px;background:#7fb0d8"></div>
<div class="mm" style="left:1751px;top:286px;width:5px;background:#7fb0d8"></div>
<div class="mm" style="left:1748px;top:288px;width:31px;background:#bcbcbc"></div>
<div class="mm" style="left:1779px;top:288px;width:18px;background:#e0a040"></div>
<div class="mm" style="left:1798px;top:288px;width:6px;background:#e0a040"></div>
<div class="mm" style="left:1805px;top:288px;width:8px;background:#c4d814"></div>
<div class="mm" style="left:1814px;top:288px;width:6px;background:#bcbcbc"></div>
<div class="mm" style="left:1821px;top:288px;width:10px;background:#bcbcbc"></div>
<div class="mm" style="left:1749px;top:290px;width:12px;background:#e8e8e8"></div>
<div class="mm" style="left:1745px;top:292px;width:7px;background:#e8e8e8"></div>
<div class="mm" style="left:1755px;top:292px;width:12px;background:#bcbcbc"></div>
<div class="mm" style="left:1745px;top:296px;width:2px;background:#c4d814"></div>
<div class="mm" style="left:1748px;top:296px;width:4px;background:#c4d814"></div>
<div class="mm" style="left:1753px;top:296px;width:7px;background:#c4d814"></div>
<div class="mm" style="left:1761px;top:296px;width:5px;background:#c4d814"></div>
<div class="mm" style="left:1745px;top:298px;width:4px;background:#e8e8e8"></div>
<div class="mm" style="left:1750px;top:298px;width:4px;background:#e8e8e8"></div>
<div class="mm" style="left:1755px;top:298px;width:17px;background:#e2534e"></div>
<div class="mm" style="left:1772px;top:298px;width:14px;background:#bcbcbc"></div>
<div class="mm" style="left:1747px;top:302px;width:30px;background:#bcbcbc"></div>
<div class="mm" style="left:1747px;top:304px;width:20px;background:#7fb0d8"></div>
<div class="mm" style="left:1745px;top:306px;width:11px;background:#e8e8e8"></div>
<div class="mm" style="left:1757px;top:306px;width:9px;background:#bcbcbc"></div>
<div class="mm" style="left:1743px;top:310px;width:6px;background:#e0a040"></div>
<div class="mm" style="left:1750px;top:310px;width:2px;background:#bcbcbc"></div>
<div class="mm" style="left:1753px;top:310px;width:20px;background:#c4d814"></div>
<div style="position:absolute;left:1743px;top:152px;width:112px;height:1px;background:repeating-linear-gradient(90deg,#c0302a 0 1px,transparent 1px 2px)"></div></div><div class="mh" style="top:111px;letter-spacing:0.354px">AHB_MAS…IVER_SV</div>
<div class="mh" style="top:129px;letter-spacing:0.899px">ahb_maste…ansfer);</div>
<div class="mh" style="top:151px;letter-spacing:0.96px">new (string name);</div>
<div class="mh" style="top:180px;letter-spacing:0.763px">void ahb_… phase);</div>
<div class="mh" style="top:194px;letter-spacing:0.715px">ahb_maste… phase);</div>
<div class="mh" style="top:210px;letter-spacing:0.869px">ahb_maste…_drive();</div>
<div class="mh" style="top:241px;letter-spacing:0.872px">ahb_maste…ignals();</div>
<div class="mh" style="top:260px;letter-spacing:0.896px">ahb_maste…ransfer);</div>
<div class="mh" style="top:299px;letter-spacing:1.029px">void ahb_…report();</div></div>
<div id="vsb"></div>
<div id="slider"></div>
<div style="position:absolute;left:1865px;top:288px;width:2px;height:6px;background:#d0362c"></div>
<div style="position:absolute;left:1856px;top:296px;width:11px;height:2px;background:#858585"></div>
</body></html>
